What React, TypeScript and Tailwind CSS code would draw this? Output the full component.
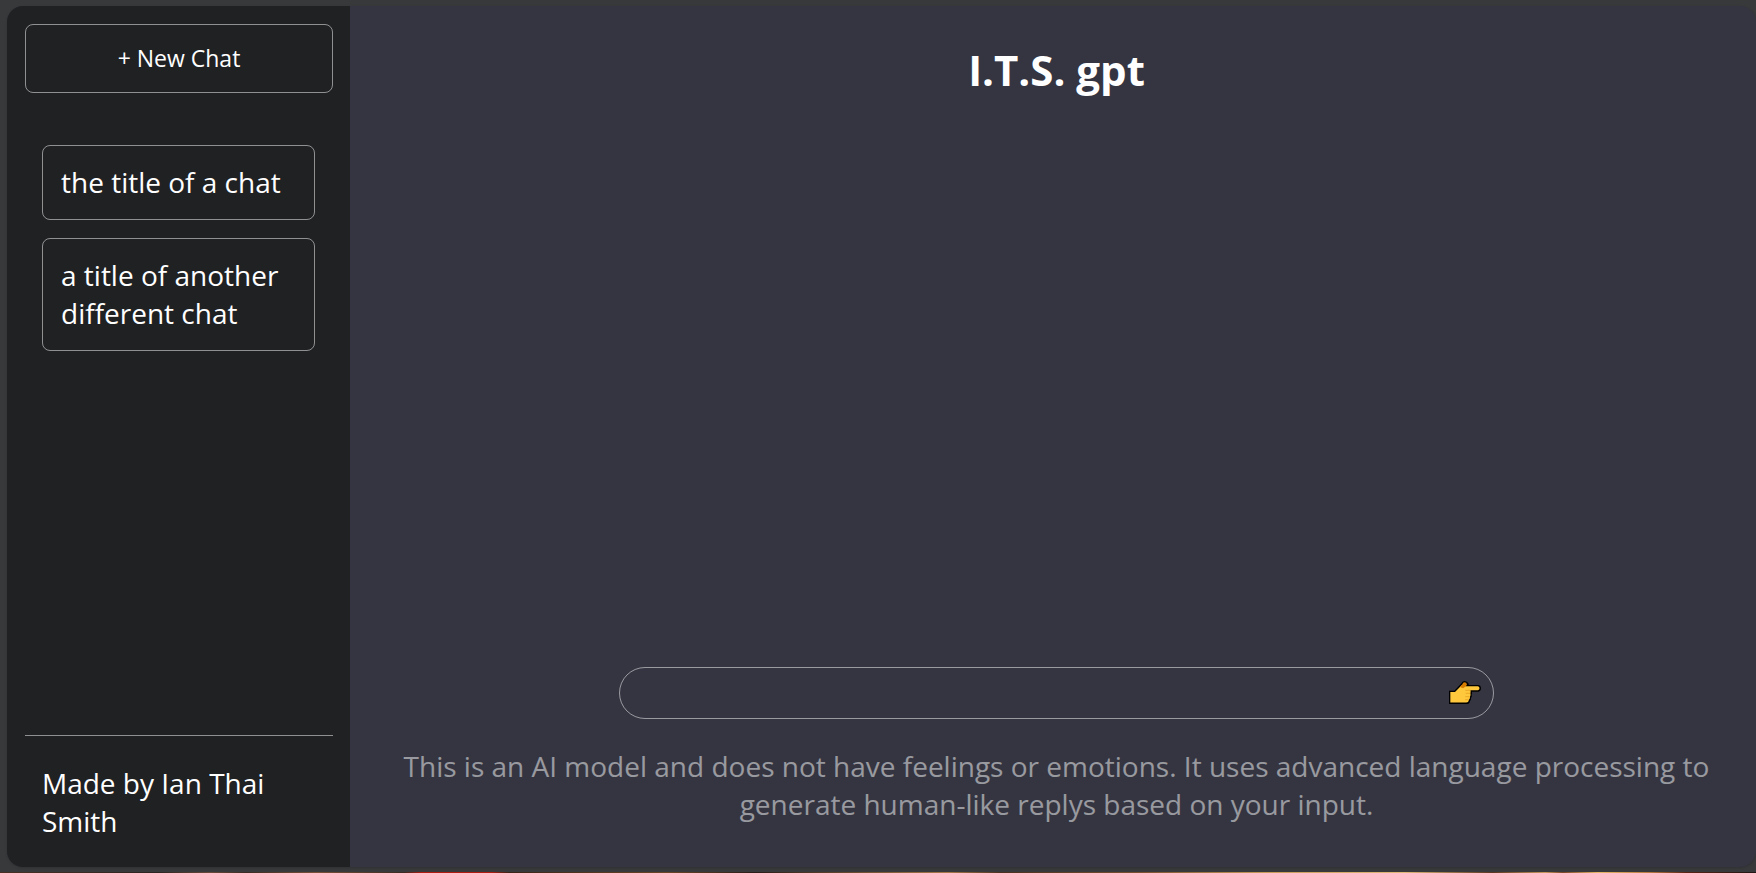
import React from "react";

const chats = ["the title of a chat", "a title of another different chat"];

function PointingHand() {
  return (
    <svg viewBox="88 90 96 72" className="h-6 w-8" aria-hidden="true">
      <path
        d="M88 119 H104 L124 98 Q128 90 134 90 Q143 90 147 98 L147 102 H175 Q184 103 184 112 Q184 121 176 122 H157 Q158 127 156 131 Q158 137 154 141 Q155 147 151 150 Q150 159 142 159 H88 Z"
        fill="#000"
      />
      <path
        d="M92 123 H106 L126 103 L140 106 H175 Q179.500 107 179.500 112 Q179.500 117 175 118 H152 Q154 122 152 127 Q154 132 151 137 Q152 142 148 146 Q147 154 140 154.500 H92 Z"
        fill="#ffc83d"
      />
      <path d="M121 108 L128 100 Q130 94 134.500 94 Q140 94.500 142 100 L139 106 L130 112 Z" fill="#d67d00" />
      <path d="M137 118 H153 M138 127 H152 M137 137 H150 M136 146 H147" fill="none" stroke="#e09a1a" strokeWidth="2" />
    </svg>
  );
}

export default function App() {
  return (
    <div className="flex h-screen flex-col bg-[#38393b] pt-1.5 pl-[7px] font-['Open_Sans','Noto_Sans',sans-serif] text-[28px] leading-[38px] text-white">
      <div className="flex min-h-0 flex-1 overflow-hidden rounded-2xl bg-[#343541] shadow">
        <aside className="flex w-[343px] shrink-0 flex-col justify-between bg-[#202123]">
          <button type="button" className="mt-[18px] mr-[17px] ml-[18px] h-[69px] rounded-lg border border-white/50 pb-0.5 text-[23px] leading-8">
            + New Chat
          </button>
          <ul className="mx-[35px] mt-[52px] flex flex-1 flex-col gap-[18px]">
            {chats.map((title) => (
              <li key={title}>
                <button type="button" className="block w-full rounded-lg border border-white/50 px-[18px] pt-[17px] pb-[18px] text-left">
                  {title}
                </button>
              </li>
            ))}
          </ul>
          <nav className="mr-[17px] ml-[18px] border-t border-white/50 px-[17px] pt-7 pb-[27px]">
            <p>Made by Ian Thai Smith</p>
          </nav>
        </aside>
        <main className="flex min-w-0 flex-1 flex-col items-center justify-between pl-[7px] text-center">
          <h1 className="mt-[35px] text-[42px] leading-[57px] font-bold">I.T.S. gpt</h1>
          <div className="flex w-full flex-col items-center">
            <form className="relative w-full max-w-[875px]" onSubmit={(event) => event.preventDefault()}>
              <input
                type="text"
                aria-label="Message"
                className="block h-[52px] w-full rounded-full border border-white/50 bg-transparent pr-14 pl-6 outline-none"
              />
              <button type="submit" aria-label="Send" className="absolute inset-y-0 right-[13px] flex items-center">
                <PointingHand />
              </button>
            </form>
            <p className="px-[18px] pt-7 pb-11 text-white/50">
              This is an AI model and does not have feelings or emotions. It uses advanced language processing to
              generate human-like replys based on your input.
            </p>
          </div>
        </main>
      </div>
      <div className="mt-[5px] -ml-[7px] h-px shrink-0 bg-[linear-gradient(90deg,#4a3024_0%,#2c2420_9%,#6a4a3a_12%,#3a2a22_14%,#7a5038_18%,#3a2a22_23%,#b01c10_24%,#b01c10_28%,#3a2418_29%,#6b4526_38%,#2a1c18_43%,#a87848_54%,#4a3020_57%,#7a5030_65%,#c89a58_72%,#e0b878_80%,#5a3420_85%,#c8985c_88%,#7a4426_89%,#e8b868_91%,#b87840_94%,#5a2414_96%,#201614_100%)]" />
    </div>
  );
}
